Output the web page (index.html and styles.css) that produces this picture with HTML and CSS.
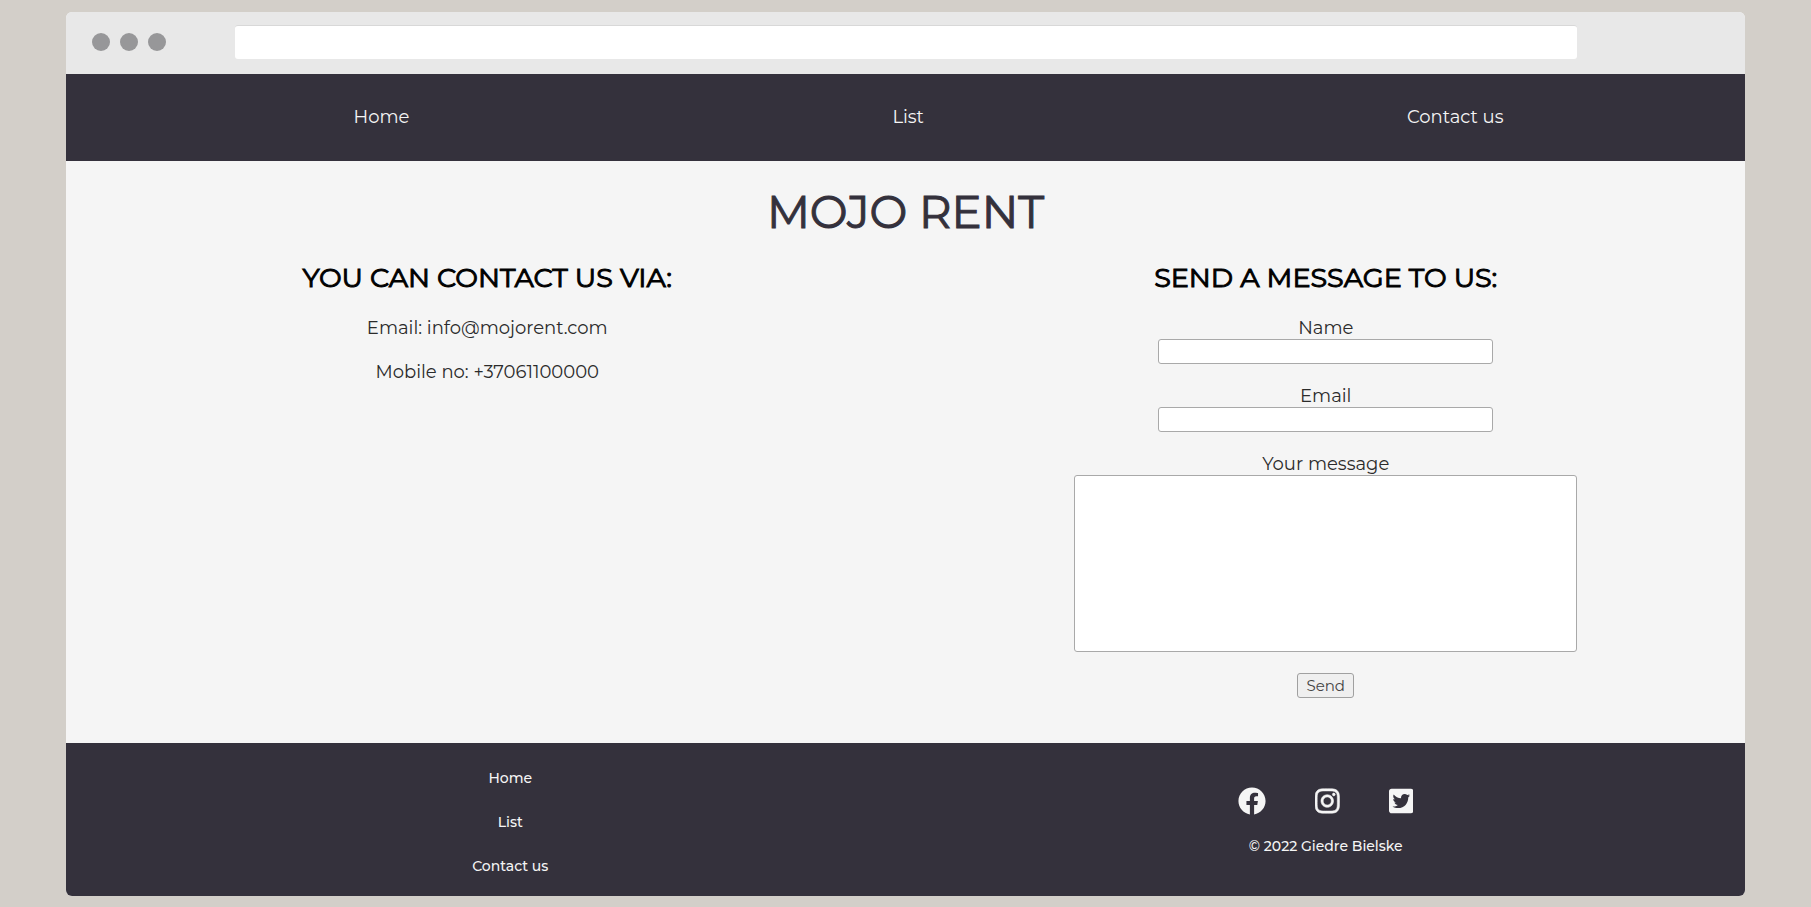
FILE: index.html
```html
<!DOCTYPE html>
<html lang="en">
<head>
<meta charset="utf-8">
<title>Mojo Rent</title>
<link rel="stylesheet" href="styles.css">
</head>
<body>
<div class="window">
  <div class="chrome">
    <div class="dots"><span class="dot"></span><span class="dot"></span><span class="dot"></span></div>
    <div class="address"></div>
  </div>
  <nav class="nav">
    <a href="#">Home</a>
    <a href="#">List</a>
    <a href="#">Contact us</a>
  </nav>
  <main class="main">
    <h1 class="title">MOJO RENT</h1>
    <div class="columns">
      <section class="column">
        <h2 class="heading">YOU CAN CONTACT US VIA:</h2>
        <p class="info">Email: info@mojorent.com</p>
        <p class="info">Mobile no: +37061100000</p>
      </section>
      <section class="column">
        <h2 class="heading">SEND A MESSAGE TO US:</h2>
        <form class="form">
          <label class="label" for="name">Name</label>
          <input class="field" id="name" type="text">
          <label class="label" for="email">Email</label>
          <input class="field" id="email" type="email">
          <label class="label" for="message">Your message</label>
          <textarea class="message" id="message"></textarea>
          <button class="send" type="button">Send</button>
        </form>
      </section>
    </div>
  </main>
  <footer class="footer">
    <div class="links">
      <a href="#">Home</a>
      <a href="#">List</a>
      <a href="#">Contact us</a>
    </div>
    <div class="social">
      <div class="icons">
        <a href="#" aria-label="Facebook"><svg class="icon" viewBox="0 0 512 512"><path d="M504 256C504 119 393 8 256 8S8 119 8 256c0 123.78 90.69 226.38 209.25 245V327.69h-63V256h63v-54.64c0-62.15 37-96.48 93.67-96.48 27.14 0 55.52 4.84 55.52 4.84v61h-31.28c-30.8 0-40.41 19.12-40.41 38.73V256h68.78l-11 71.69h-57.78V501C413.31 482.38 504 379.78 504 256z"/></svg></a>
        <a href="#" aria-label="Instagram"><svg class="icon outlined" viewBox="0 0 448 512"><path d="M224.1 141c-63.6 0-114.9 51.3-114.9 114.9s51.3 114.9 114.9 114.9S339 319.5 339 255.900 287.700 141 224.100 141zm0 189.600c-41.100 0-74.700-33.500-74.700-74.700s33.500-74.700 74.700-74.700 74.700 33.500 74.700 74.700-33.600 74.700-74.700 74.700zm146.400-194.300c0 14.900-12 26.800-26.800 26.800-14.900 0-26.800-12-26.800-26.800s12-26.800 26.800-26.800 26.800 12 26.800 26.800zm76.100 27.200c-1.700-35.900-9.900-67.700-36.200-93.900-26.200-26.200-58-34.400-93.900-36.200-37-2.100-147.900-2.100-184.900 0-35.800 1.700-67.600 9.900-93.900 36.100s-34.400 58-36.200 93.900c-2.100 37-2.100 147.900 0 184.900 1.700 35.900 9.900 67.700 36.200 93.900s58 34.400 93.900 36.200c37 2.100 147.900 2.100 184.900 0 35.900-1.700 67.700-9.900 93.900-36.200 26.200-26.200 34.400-58 36.200-93.900 2.100-37 2.100-147.800 0-184.800zM398.800 388c-7.800 19.600-22.900 34.700-42.600 42.600-29.500 11.700-99.500 9-132.100 9s-102.700 2.600-132.100-9c-19.600-7.800-34.700-22.900-42.600-42.600-11.700-29.500-9-99.500-9-132.100s-2.600-102.700 9-132.100c7.800-19.600 22.900-34.700 42.600-42.600 29.500-11.700 99.500-9 132.100-9s102.700-2.600 132.100 9c19.600 7.800 34.700 22.900 42.600 42.600 11.700 29.500 9 99.500 9 132.100s2.700 102.700-9 132.100z"/></svg></a>
        <a href="#" aria-label="Twitter"><svg class="icon" viewBox="0 0 448 512"><path d="M400 32H48C21.500 32 0 53.500 0 80v352c0 26.500 21.500 48 48 48h352c26.500 0 48-21.500 48-48V80c0-26.500-21.500-48-48-48zm-48.900 158.800c.2 2.800.2 5.700.2 8.500 0 86.700-66 186.600-186.600 186.600-37.200 0-71.700-10.800-100.700-29.400 5.300.6 10.400.8 15.800.8 30.700 0 58.900-10.400 81.400-28-28.800-.6-53-19.500-61.300-45.500 10.100 1.500 19.200 1.500 29.600-1.200-30-6.100-52.500-32.500-52.500-64.400v-.8c8.700 4.900 18.900 7.900 29.600 8.300a65.447 65.447 0 0 1-29.200-54.600c0-12.200 3.200-23.400 8.900-33.100 32.300 39.800 80.800 65.800 135.200 68.600-9.300-44.500 24-80.600 64-80.600 18.900 0 35.900 7.900 47.900 20.700 14.800-2.800 29-8.300 41.600-15.800-4.900 15.200-15.200 28-28.800 36.100 13.200-1.400 26-5.100 37.800-10.200-8.900 13.100-20.100 24.700-32.900 34z"/></svg></a>
      </div>
      <p class="copyright">© 2022 Giedre Bielske</p>
    </div>
  </footer>
</div>
</body>
</html>
```
FILE: styles.css
```css
* { box-sizing: border-box; }
body {
  margin: 0;
  padding: 12px 66px;
  background: #d3cfc9;
  color: #2b2b2b;
  font-family: Montserrat, Inter, sans-serif;
  font-size: 18px;
  line-height: 22px;
}
a { color: #f5f5f5; text-decoration: none; }
.window { border-radius: 6px; overflow: hidden; background: #f5f5f5; }
.chrome {
  display: flex;
  align-items: center;
  height: 62px;
  padding: 0 10% 2px 26px;
  background: #e8e8e8;
}
.dots { display: flex; flex: 1; gap: 10px; }
.dot { width: 18px; height: 18px; border-radius: 50%; background: #979799; }
.address {
  width: 1342px;
  max-width: 90.4%;
  flex: none;
  height: 34px;
  border-radius: 3px;
  border-top: 1px solid #d8d8d8;
  background: #fff;
}
.nav {
  display: flex;
  justify-content: space-around;
  align-items: center;
  height: 87px;
  padding: 0 0 2px 46px;
  background: #34313c;
}
.main { padding: 22px 0 45px; text-align: center; }
.title {
  margin: 0;
  color: #34313c;
  font-size: 45px;
  font-weight: 400;
  line-height: 58px;
  -webkit-text-stroke: 1px #34313c;
}
.columns {
  display: grid;
  grid-template-columns: 1fr 1fr;
  padding: 20px 0 0 2px;
}
.heading {
  margin: 0 0 22px;
  color: #000;
  font-size: 27px;
  font-weight: 400;
  line-height: 34px;
  -webkit-text-stroke: 1px #000;
}
.info { margin: 0 0 22px; }
.form { display: flex; flex-direction: column; align-items: center; }
.field, .message {
  border: 1px solid #a9a9a9;
  border-radius: 3px;
  background: #fff;
  font: inherit;
}
.field { width: 40%; height: 25px; margin-bottom: 21px; }
.message { width: 60%; height: 177px; margin-bottom: 21px; resize: none; }
.send {
  height: 25px;
  padding: 0 8px;
  border: 1px solid #a0a0a0;
  border-radius: 3px;
  background: #efefef;
  color: #444;
  font-family: inherit;
  font-size: 15px;
  line-height: 20px;
}
.footer {
  display: grid;
  grid-template-columns: 1fr 1fr;
  height: 153px;
  padding: 4px 0 0 2px;
  background: #34313c;
  color: #f5f5f5;
  font-size: 14px;
  font-weight: 500;
}
.links {
  display: flex;
  flex-direction: column;
  align-items: center;
  justify-content: center;
  gap: 22px;
  padding-left: 46px;
}
.social {
  display: flex;
  flex-direction: column;
  align-items: center;
  justify-content: center;
  gap: 20px;
}
.icons { display: flex; gap: 49px; }
.icons a { display: flex; }
.icon { height: 28px; fill: #f5f5f5; }
.outlined { stroke: #f5f5f5; stroke-width: 10; }
.copyright { margin: 0; }
```
